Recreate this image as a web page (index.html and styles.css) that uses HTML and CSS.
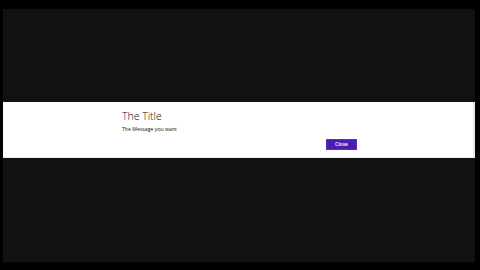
FILE: index.html
```html
<!DOCTYPE html>
<html lang="en">
<head>
    <meta charset="UTF-8">
    <title>Message Dialog</title>
    <link rel="stylesheet" href="styles.css">
</head>
<body>
    <div class="screen">
        <div class="dialog">
            <div class="dialog-content">
                <h2 class="dialog-title">The Title</h2>
                <p class="dialog-message">The Message you want</p>
                <div class="dialog-buttons">
                    <button type="button" class="dialog-button">Close</button>
                </div>
            </div>
        </div>
    </div>
</body>
</html>
```

FILE: styles.css
```css
body {
    margin: 0;
    background-color: #000;
    font-family: "Open Sans", "Noto Sans", sans-serif;
}
.screen {
    margin: 9px 5px 8px 3px;
    height: 253px;
    background-color: #111;
    padding-top: 93px;
    box-sizing: border-box;
}
.dialog {
    background-color: #fff;
    height: 56px;
    border-right: 2px solid #e8e8e8;
    border-bottom: 1px solid #ececec;
    box-sizing: border-box;
}
.dialog-content {
    width: 235px;
    margin-left: 119px;
    padding-top: 8px;
}
.dialog-title {
    margin: 0;
    font-size: 10.5px;
    font-weight: 300;
    line-height: 13px;
    color: #111;
}
.dialog-message {
    margin: 3px 0 0;
    font-size: 5.2px;
    line-height: 7px;
    color: #111;
}
.dialog-buttons {
    display: flex;
    justify-content: flex-end;
    margin-top: 6px;
}
.dialog-button {
    width: 31px;
    height: 11px;
    padding: 0;
    border: 1px solid #5a2ec8;
    background-color: #4a1db2;
    color: #fff;
    font-family: inherit;
    font-size: 5px;
    font-weight: 600;
    line-height: 9px;
}
```
